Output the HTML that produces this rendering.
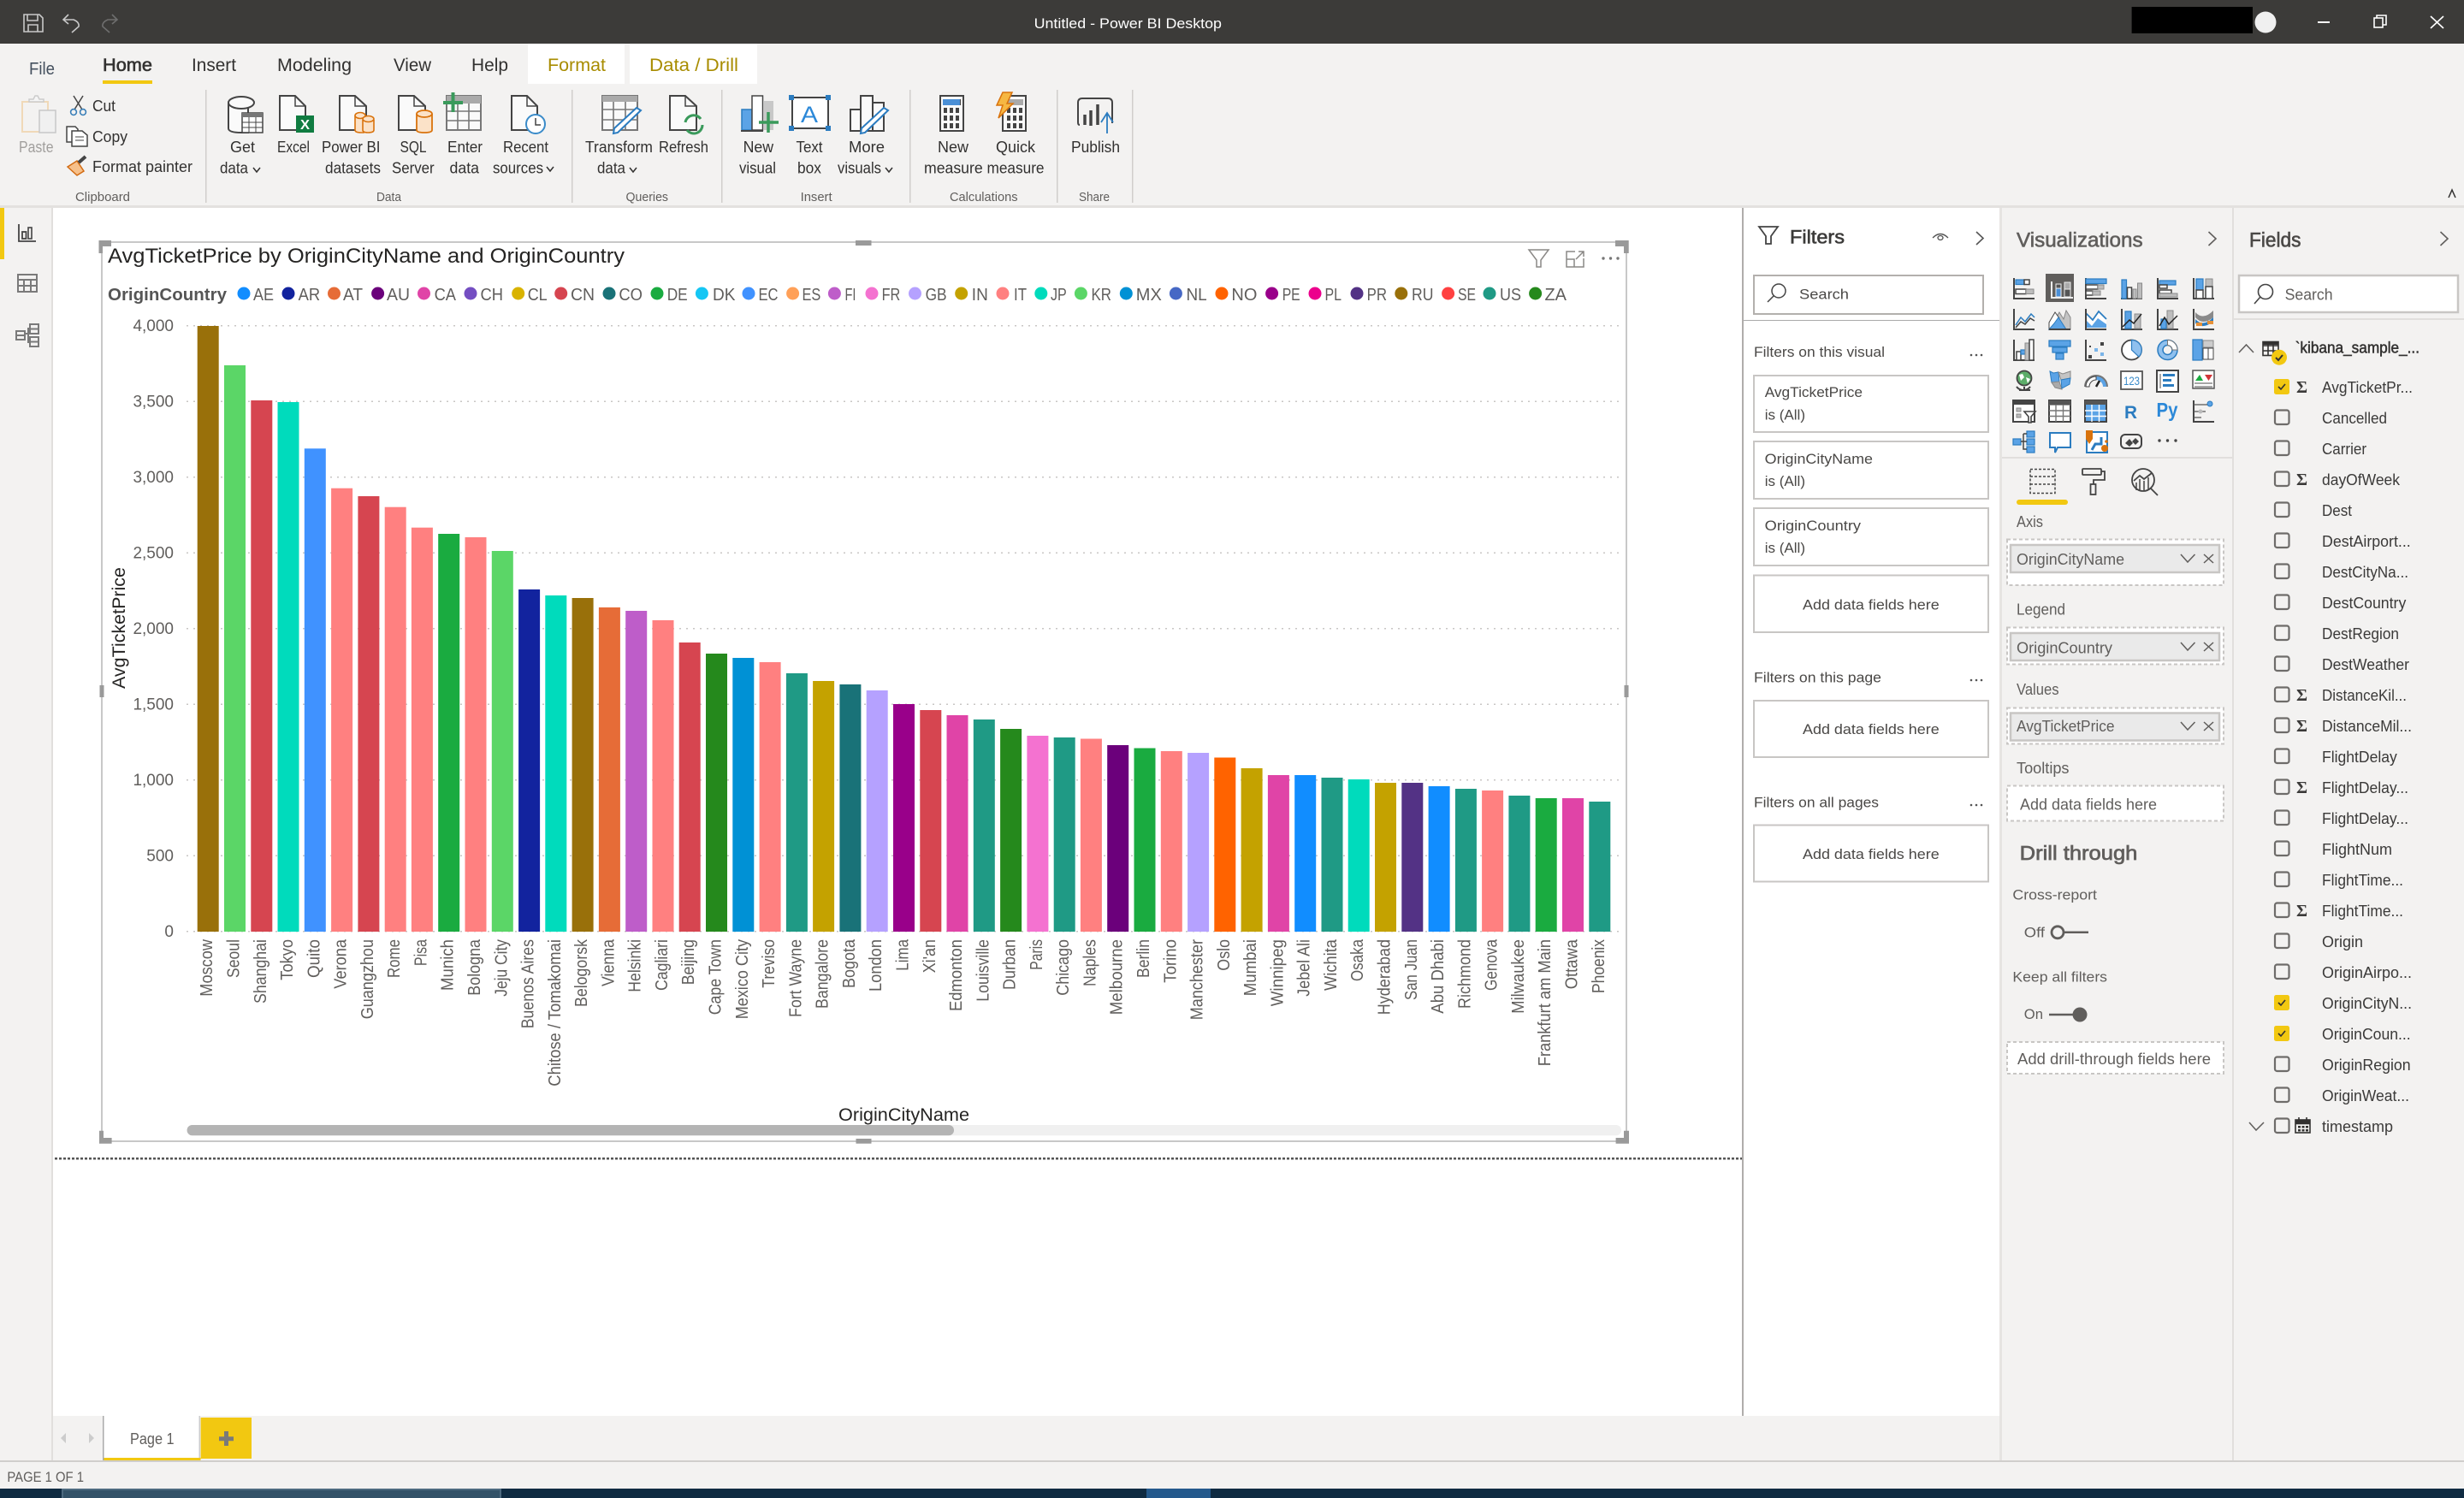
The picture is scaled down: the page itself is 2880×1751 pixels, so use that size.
<!DOCTYPE html>
<html lang="en"><head><meta charset="utf-8"><title>Untitled - Power BI Desktop</title>
<style>
html,body{margin:0;padding:0;width:2880px;height:1751px;overflow:hidden;background:#fff}
svg{display:block;font-family:"Liberation Sans",sans-serif}
.k{fill:none;stroke:#444;stroke-width:2}
.t{fill:none;stroke:#444;stroke-width:1.5}
.b{fill:#5ba3e6;stroke:#2b7cc0;stroke-width:1.2}
.g{fill:#bdbdbd;stroke:#8a8a8a;stroke-width:1}
.w{fill:#fff;stroke:#444;stroke-width:1.5}
.rb{font-size:18px;fill:#323130}
.gl{font-size:15px;fill:#605e5c}
.tb{font-size:21px;fill:#323130}
.lg{font-size:20px;fill:#605e5c}
.ya{font-size:19px;fill:#605e5c}
.xl{font-size:20px;fill:#605e5c}
.fp{font-size:17px;fill:#4a4846}
.vp{font-size:18px;fill:#605e5c}
.fd{font-size:18.5px;fill:#3b3a39}
.cb{fill:none;stroke:#6e6c6a;stroke-width:2.2}
.ck{fill:#f2c811}
.cm{fill:none;stroke:#323130;stroke-width:1.6}
.fb{fill:#fff;stroke:#c8c6c4;stroke-width:2}
.dw{fill:#fff;stroke:#c8c6c4;stroke-width:2;stroke-dasharray:4 3}
.ch{fill:#eaeaea;stroke:#c8c6c4;stroke-width:2.5}
.hd{fill:#9a9a9a}
</style></head><body>
<svg width="2880" height="1751" viewBox="0 0 2880 1751" xmlns="http://www.w3.org/2000/svg">
<!-- backgrounds -->
<rect width="2880" height="1751" fill="#f3f2f1"/>
<rect x="62" y="243" width="1974" height="1412" fill="#fff"/>
<rect x="2038" y="243" width="299" height="1412" fill="#fff"/>
<rect x="2036" y="243" width="2" height="1412" fill="#b0adab"/>
<rect x="60" y="243" width="2" height="1464" fill="#e1dfdd"/>
<rect x="2337" y="243" width="3" height="1464" fill="#e6e4e2"/>
<rect x="2609" y="243" width="2" height="1464" fill="#e1dfdd"/>
<rect x="0" y="240" width="2880" height="3" fill="#e3e1df"/>
<!-- title bar -->
<rect width="2880" height="51" fill="#3c3b39"/>
<g fill="none" stroke="#c8c8c8" stroke-width="1.6">
<path d="M28 17H46L50 21V37H28Z"/><path d="M32 17V24H44V17M33 37V29H44V37"/>
<path d="M80 17L74 23 80 28M74 23H86Q93 26 92 31L84 38"/>
<path stroke="#6e6e6e" d="M131 17L137 23 131 28M137 23H126Q119 26 120 31L128 38"/>
</g>
<text x="1208.6" y="33" font-size="17" fill="#fff" textLength="219.4" lengthAdjust="spacingAndGlyphs">Untitled - Power BI Desktop</text>
<rect x="2491.6" y="8" width="141.4" height="31" fill="#000"/>
<circle cx="2648" cy="26" r="12.5" fill="#f0f0f0"/>
<rect x="2709" y="25" width="14" height="2" fill="#fff"/>
<g fill="none" stroke="#fff" stroke-width="1.6"><rect x="2775" y="21" width="10" height="11"/><path d="M2778 21V18H2789V29H2785"/><path d="M2841 19L2856 33M2856 19L2841 33"/></g>
<!-- tabs -->
<rect x="617" y="51" width="113" height="47" fill="#fff"/>
<rect x="736" y="51" width="149" height="47" fill="#fff"/>
<text x="34" y="87" style="fill:#44505e;font-size:20px" textLength="30" lengthAdjust="spacingAndGlyphs">File</text>
<text x="120" y="83" class="tb" stroke="#323130" stroke-width=".6" textLength="58" lengthAdjust="spacingAndGlyphs">Home</text>
<rect x="120" y="94" width="58" height="4" fill="#f2c811"/>
<text x="224" y="83" class="tb" textLength="52" lengthAdjust="spacingAndGlyphs">Insert</text>
<text x="324" y="83" class="tb" textLength="87" lengthAdjust="spacingAndGlyphs">Modeling</text>
<text x="460" y="83" class="tb" textLength="44" lengthAdjust="spacingAndGlyphs">View</text>
<text x="551" y="83" class="tb" textLength="43" lengthAdjust="spacingAndGlyphs">Help</text>
<text x="640" y="83" class="tb" style="fill:#a88c00" textLength="68" lengthAdjust="spacingAndGlyphs">Format</text>
<text x="759" y="83" class="tb" style="fill:#a88c00" textLength="104" lengthAdjust="spacingAndGlyphs">Data / Drill</text>
<!-- ribbon separators -->
<g fill="#d0cecc"><rect x="240" y="105" width="1.5" height="132"/><rect x="668" y="105" width="1.5" height="132"/><rect x="843" y="105" width="1.5" height="132"/><rect x="1063" y="105" width="1.5" height="132"/><rect x="1235" y="105" width="1.5" height="132"/><rect x="1323" y="105" width="1.5" height="132"/></g>
<!-- ribbon group labels -->
<text x="88" y="235" class="gl" textLength="64" lengthAdjust="spacingAndGlyphs">Clipboard</text>
<text x="440" y="235" class="gl" textLength="29" lengthAdjust="spacingAndGlyphs">Data</text>
<text x="731.5" y="235" class="gl" textLength="49.5" lengthAdjust="spacingAndGlyphs">Queries</text>
<text x="935.6" y="235" class="gl" textLength="37" lengthAdjust="spacingAndGlyphs">Insert</text>
<text x="1110" y="235" class="gl" textLength="79.5" lengthAdjust="spacingAndGlyphs">Calculations</text>
<text x="1261" y="235" class="gl" textLength="36" lengthAdjust="spacingAndGlyphs">Share</text>
<!-- ribbon labels -->
<text x="22" y="178" class="rb" style="fill:#a19f9d" textLength="40.5" lengthAdjust="spacingAndGlyphs">Paste</text>
<text x="108" y="130" class="rb" textLength="27" lengthAdjust="spacingAndGlyphs">Cut</text>
<text x="108" y="166" class="rb" textLength="41" lengthAdjust="spacingAndGlyphs">Copy</text>
<text x="108" y="201" class="rb" textLength="117" lengthAdjust="spacingAndGlyphs">Format painter</text>
<text x="269" y="178" class="rb" textLength="29" lengthAdjust="spacingAndGlyphs">Get</text>
<text x="257" y="202.5" class="rb" textLength="33" lengthAdjust="spacingAndGlyphs">data</text>
<text x="324" y="178" class="rb" textLength="38" lengthAdjust="spacingAndGlyphs">Excel</text>
<text x="376" y="178" class="rb" textLength="68.5" lengthAdjust="spacingAndGlyphs">Power BI</text>
<text x="380" y="202.5" class="rb" textLength="65" lengthAdjust="spacingAndGlyphs">datasets</text>
<text x="467.5" y="178" class="rb" textLength="31" lengthAdjust="spacingAndGlyphs">SQL</text>
<text x="458" y="202.5" class="rb" textLength="49.6" lengthAdjust="spacingAndGlyphs">Server</text>
<text x="523" y="178" class="rb" textLength="41" lengthAdjust="spacingAndGlyphs">Enter</text>
<text x="525.5" y="202.5" class="rb" textLength="34.5" lengthAdjust="spacingAndGlyphs">data</text>
<text x="588" y="178" class="rb" textLength="53" lengthAdjust="spacingAndGlyphs">Recent</text>
<text x="576" y="202.5" class="rb" textLength="59" lengthAdjust="spacingAndGlyphs">sources</text>
<text x="684" y="178" class="rb" textLength="79" lengthAdjust="spacingAndGlyphs">Transform</text>
<text x="698" y="202.5" class="rb" textLength="33" lengthAdjust="spacingAndGlyphs">data</text>
<text x="770" y="178" class="rb" textLength="58" lengthAdjust="spacingAndGlyphs">Refresh</text>
<text x="868.6" y="178" class="rb" textLength="35.5" lengthAdjust="spacingAndGlyphs">New</text>
<text x="864" y="202.5" class="rb" textLength="43" lengthAdjust="spacingAndGlyphs">visual</text>
<text x="930.5" y="178" class="rb" textLength="31" lengthAdjust="spacingAndGlyphs">Text</text>
<text x="932" y="202.5" class="rb" textLength="28" lengthAdjust="spacingAndGlyphs">box</text>
<text x="992" y="178" class="rb" textLength="42" lengthAdjust="spacingAndGlyphs">More</text>
<text x="979" y="202.5" class="rb" textLength="51" lengthAdjust="spacingAndGlyphs">visuals</text>
<text x="1096" y="178" class="rb" textLength="36" lengthAdjust="spacingAndGlyphs">New</text>
<text x="1080" y="202.5" class="rb" textLength="68.7" lengthAdjust="spacingAndGlyphs">measure</text>
<text x="1164" y="178" class="rb" textLength="46" lengthAdjust="spacingAndGlyphs">Quick</text>
<text x="1153.5" y="202.5" class="rb" textLength="67" lengthAdjust="spacingAndGlyphs">measure</text>
<text x="1252" y="178" class="rb" textLength="57" lengthAdjust="spacingAndGlyphs">Publish</text>
<g fill="none" stroke="#323130" stroke-width="1.5"><path d="M296 196L300 201 304 196"/><path d="M639 195L643 200 647 195"/><path d="M736 196L740 201 744 196"/><path d="M1035 196L1039 201 1043 196"/><path d="M2862 231L2866 222 2870 231"/></g>
<!-- ribbon icons -->
<g>
<rect x="26" y="119" width="30" height="35" fill="none" stroke="#f0d9b8" stroke-width="2"/>
<path d="M34 119v-3h5l2-4h3l2 4h5v3z" fill="#f5f5f5" stroke="#ccc" stroke-width="1.5"/>
<rect x="46" y="129" width="19" height="26" fill="#f0f0f0" stroke="#c8c8c8" stroke-width="1.5"/>
<path d="M86 112L96 128M97 112L87 128" class="t"/>
<circle cx="86" cy="131" r="3.4" fill="none" stroke="#3a7fb8" stroke-width="1.6"/><circle cx="97" cy="131" r="3.4" fill="none" stroke="#3a7fb8" stroke-width="1.6"/>
<path d="M78 148H88L91 151V166H78Z" class="w"/><path d="M84 153H96L102 158V171H84Z" class="w"/><path d="M88 160H98M88 164H98" class="t" style="stroke-width:1"/>
<path d="M79 195L90 188 98 200 90 205Z" fill="#f7c08a" stroke="#d26b12" stroke-width="1.5"/><path d="M92 190L100 183" stroke="#444" stroke-width="4" fill="none"/>
<!-- get data -->
<path d="M267 120V150Q267 155 282 155H290V120" fill="#fafafa" stroke="#444" stroke-width="2"/><ellipse cx="282" cy="120" rx="15" ry="7" fill="#fafafa" stroke="#444" stroke-width="2"/>
<rect x="283" y="132" width="24" height="23" fill="#fff" stroke="#444" stroke-width="1.5"/><rect x="283" y="132" width="24" height="5" fill="#777"/><path d="M283 143H307M283 149H307M291 137V155M299 137V155" class="t" style="stroke-width:1"/>
<!-- excel -->
<path d="M327 112H345L357 124V152H327Z" fill="#fafafa" stroke="#444" stroke-width="2"/><path d="M345 112V124H357" class="t"/>
<rect x="346" y="135" width="21" height="20" fill="#107c41"/><text x="351" y="151" font-size="16" font-weight="700" fill="#fff" textLength="11" lengthAdjust="spacingAndGlyphs">X</text>
<!-- powerbi -->
<path d="M397 112H415L428 124V152H397Z" fill="#fafafa" stroke="#444" stroke-width="2"/><path d="M415 112V124H428" class="t"/>
<g fill="#fbe2c8" stroke="#d9730d" stroke-width="1.6"><path d="M415 135V152Q415 155 422 155H425V135"/><ellipse cx="421" cy="135" rx="6" ry="3.5"/><path d="M424 140V152Q424 155 430 155Q437 155 437 152V140"/><ellipse cx="430.5" cy="139" rx="6.5" ry="3.5"/></g>
<!-- sql -->
<path d="M466 112H484L497 124V152H466Z" fill="#fafafa" stroke="#444" stroke-width="2"/><path d="M484 112V124H497" class="t"/>
<g fill="#fbe2c8" stroke="#d9730d" stroke-width="1.8"><path d="M487 133V152Q487 155 496 155Q505 155 505 152V133"/><ellipse cx="496" cy="133" rx="9" ry="4"/></g>
<!-- enter -->
<rect x="522" y="112" width="40" height="40" fill="#fafafa" stroke="#777" stroke-width="2"/><rect x="522" y="112" width="40" height="9" fill="#aaa"/><path d="M522 130H562M522 141H562M535 121V152M548 121V152" fill="none" stroke="#777" stroke-width="1.6"/>
<path d="M518 120H541M529.5 108V131" stroke="#3a9a5b" stroke-width="4" fill="none"/>
<!-- recent -->
<path d="M598 112H616L628 124V152H598Z" fill="#fafafa" stroke="#444" stroke-width="2"/><path d="M616 112V124H628" class="t"/>
<circle cx="626" cy="145" r="11" fill="#fff" stroke="#3a8bc9" stroke-width="2"/><path d="M626 138V146H632" class="t"/>
<!-- transform -->
<rect x="704" y="112" width="41" height="40" fill="#fafafa" stroke="#777" stroke-width="2"/><rect x="704" y="112" width="41" height="7" fill="#aaa"/><path d="M704 128H745M704 140H745M717 119V152M731 119V152" fill="none" stroke="#777" stroke-width="1.6"/>
<path d="M744 126L749 129 722 155 717 156 718 150Z" fill="#fff" stroke="#2b7cc0" stroke-width="2"/>
<!-- refresh -->
<path d="M783 112H801L814 124V152H783Z" fill="#fafafa" stroke="#444" stroke-width="2"/><path d="M801 112V124H814" class="t"/>
<path d="M801 143A10 10 0 0 1 819 139M821 146A10 10 0 0 1 803 152" fill="none" stroke="#3a9a5b" stroke-width="3"/>
<!-- new visual -->
<rect x="867" y="128" width="12" height="24" fill="#5ba3e6" stroke="#2b7cc0" stroke-width="1.5"/><rect x="879" y="112" width="12.5" height="40" fill="#fff" stroke="#444" stroke-width="1.5"/><rect x="892" y="118" width="12" height="34" fill="#c8c8c8"/><path d="M866 153H892" class="k"/>
<path d="M887 143H910M898 131V155" stroke="#3a9a5b" stroke-width="3.5" fill="none"/>
<!-- text box -->
<rect x="926" y="114" width="42" height="36" fill="#fff" stroke="#444" stroke-width="2"/>
<g fill="#2b7cc0"><rect x="922" y="111" width="6" height="6"/><rect x="965" y="111" width="6" height="6"/><rect x="922" y="147" width="6" height="6"/><rect x="965" y="147" width="6" height="6"/></g>
<text x="936" y="143" font-size="27" fill="#2b88d8" textLength="20" lengthAdjust="spacingAndGlyphs">A</text>
<!-- more visuals -->
<rect x="994" y="128" width="12" height="25" fill="#fafafa" stroke="#444" stroke-width="2"/><rect x="1006" y="112" width="14" height="41" fill="#fafafa" stroke="#444" stroke-width="2"/><rect x="1020" y="120" width="13" height="33" fill="#fafafa" stroke="#444" stroke-width="2"/>
<path d="M1033 126L1038 129 1011 155 1006 156 1007 150Z" fill="#fff" stroke="#2b7cc0" stroke-width="2"/>
<!-- new measure -->
<rect x="1099" y="112" width="27" height="41" fill="#fafafa" stroke="#444" stroke-width="2"/><rect x="1102" y="116" width="21" height="7" fill="#444"/><rect x="1102" y="116" width="20" height="7" fill="#4a8fd6"/>
<g fill="#444"><rect x="1103" y="126" width="4" height="6"/><rect x="1110" y="126" width="4" height="6"/><rect x="1117" y="126" width="4" height="6"/><rect x="1103" y="135" width="4" height="6"/><rect x="1110" y="135" width="4" height="6"/><rect x="1117" y="135" width="4" height="6"/><rect x="1103" y="144" width="4" height="6"/><rect x="1110" y="144" width="4" height="6"/><rect x="1117" y="144" width="4" height="6"/></g>
<!-- quick measure -->
<rect x="1172" y="112" width="27" height="41" fill="#fafafa" stroke="#444" stroke-width="2"/><rect x="1176" y="116" width="20" height="7" fill="#aaa"/>
<g fill="#444"><rect x="1177" y="126" width="4" height="6"/><rect x="1184" y="126" width="4" height="6"/><rect x="1191" y="126" width="4" height="6"/><rect x="1177" y="135" width="4" height="6"/><rect x="1184" y="135" width="4" height="6"/><rect x="1191" y="135" width="4" height="6"/><rect x="1177" y="144" width="4" height="6"/><rect x="1184" y="144" width="4" height="6"/><rect x="1191" y="144" width="4" height="6"/></g>
<path d="M1172 108H1183L1177 121H1184L1167 138 1172 123H1165Z" fill="#f6b742" stroke="#d9730d" stroke-width="1.5"/>
<!-- publish -->
<path d="M1262 146Q1260 146 1260 143V120Q1260 115 1265 115H1295Q1300 115 1300 120V144" fill="none" stroke="#444" stroke-width="2"/>
<path d="M1268 146V134M1275 147V129M1283 146V122" stroke="#444" stroke-width="3.5" fill="none"/>
<path d="M1294 156V133M1287 143L1294 132 1301 143" fill="none" stroke="#2b7cc0" stroke-width="1.8"/>
</g>
<!-- side bar -->
<rect x="0" y="243" width="5" height="60" fill="#f2c811"/>
<g fill="none" stroke="#444" stroke-width="1.8"><path d="M22 262V282H42"/><rect x="26" y="271" width="4.5" height="8"/><rect x="32" y="268" width="0" height="0"/><rect x="33" y="266" width="4" height="13" style="stroke-width:1.6"/></g>
<g fill="none" stroke="#7a7a7a" stroke-width="2"><rect x="21" y="321" width="22" height="20"/><path d="M21 327H43M21 334H43M28 327V341M36 327V341"/>
<rect x="19" y="387" width="10" height="10"/><rect x="35" y="379" width="10" height="11"/><rect x="35" y="394" width="10" height="11"/><path d="M29 390H33V384H35M33 390V400H35M19 392H29M35 384.500H45M35 399.500H45"/></g>
<!-- visual frame -->
<g fill="none" stroke="#c8c8c8" stroke-width="2"><path d="M119 290V1334H1901V290M125 283H1897"/></g>
<!-- title -->
<text x="126" y="307" font-size="24" fill="#252423" textLength="604" lengthAdjust="spacingAndGlyphs">AvgTicketPrice by OriginCityName and OriginCountry</text>
<!-- legend -->
<text x="126" y="351" font-size="20" font-weight="700" fill="#555" textLength="139" lengthAdjust="spacingAndGlyphs">OriginCountry</text>
<g>
<circle cx="285" cy="343" r="7.5" fill="#118dff"/><text x="296" y="351" class="lg" textLength="24" lengthAdjust="spacingAndGlyphs">AE</text>
<circle cx="337" cy="343" r="7.5" fill="#12239e"/><text x="348.6" y="351" class="lg" textLength="25.5" lengthAdjust="spacingAndGlyphs">AR</text>
<circle cx="390.500" cy="343" r="7.5" fill="#e66c37"/><text x="401" y="351" class="lg" textLength="23" lengthAdjust="spacingAndGlyphs">AT</text>
<circle cx="441.600" cy="343" r="7.5" fill="#6b007b"/><text x="452" y="351" class="lg" textLength="27" lengthAdjust="spacingAndGlyphs">AU</text>
<circle cx="495.500" cy="343" r="7.5" fill="#e044a7"/><text x="507.6" y="351" class="lg" textLength="25.4" lengthAdjust="spacingAndGlyphs">CA</text>
<circle cx="550" cy="343" r="7.5" fill="#744ec2"/><text x="561.5" y="351" class="lg" textLength="26.5" lengthAdjust="spacingAndGlyphs">CH</text>
<circle cx="605.700" cy="343" r="7.5" fill="#d9b300"/><text x="616.7" y="351" class="lg" textLength="23" lengthAdjust="spacingAndGlyphs">CL</text>
<circle cx="655.700" cy="343" r="7.5" fill="#d64550"/><text x="667" y="351" class="lg" textLength="28" lengthAdjust="spacingAndGlyphs">CN</text>
<circle cx="712" cy="343" r="7.5" fill="#197278"/><text x="723.4" y="351" class="lg" textLength="27.6" lengthAdjust="spacingAndGlyphs">CO</text>
<circle cx="768" cy="343" r="7.5" fill="#1aab40"/><text x="779.7" y="351" class="lg" textLength="24" lengthAdjust="spacingAndGlyphs">DE</text>
<circle cx="820.400" cy="343" r="7.5" fill="#15c6f4"/><text x="833" y="351" class="lg" textLength="26.5" lengthAdjust="spacingAndGlyphs">DK</text>
<circle cx="875" cy="343" r="7.5" fill="#4092ff"/><text x="886.5" y="351" class="lg" textLength="23" lengthAdjust="spacingAndGlyphs">EC</text>
<circle cx="926.600" cy="343" r="7.5" fill="#ffa058"/><text x="937.5" y="351" class="lg" textLength="21.8" lengthAdjust="spacingAndGlyphs">ES</text>
<circle cx="975.400" cy="343" r="7.5" fill="#be5dc9"/><text x="987.5" y="351" class="lg" textLength="13" lengthAdjust="spacingAndGlyphs">FI</text>
<circle cx="1019" cy="343" r="7.5" fill="#f472d0"/><text x="1030.6" y="351" class="lg" textLength="21.7" lengthAdjust="spacingAndGlyphs">FR</text>
<circle cx="1069.500" cy="343" r="7.5" fill="#b5a1ff"/><text x="1081.6" y="351" class="lg" textLength="25" lengthAdjust="spacingAndGlyphs">GB</text>
<circle cx="1123.700" cy="343" r="7.5" fill="#c4a200"/><text x="1135.8" y="351" class="lg" textLength="19" lengthAdjust="spacingAndGlyphs">IN</text>
<circle cx="1172" cy="343" r="7.5" fill="#ff8080"/><text x="1185" y="351" class="lg" textLength="15" lengthAdjust="spacingAndGlyphs">IT</text>
<circle cx="1216.800" cy="343" r="7.5" fill="#00dbbc"/><text x="1228" y="351" class="lg" textLength="18.8" lengthAdjust="spacingAndGlyphs">JP</text>
<circle cx="1263.400" cy="343" r="7.5" fill="#5bd667"/><text x="1275.5" y="351" class="lg" textLength="23.5" lengthAdjust="spacingAndGlyphs">KR</text>
<circle cx="1316.300" cy="343" r="7.5" fill="#0091d5"/><text x="1327.8" y="351" class="lg" textLength="30" lengthAdjust="spacingAndGlyphs">MX</text>
<circle cx="1374.400" cy="343" r="7.5" fill="#4668c5"/><text x="1386.5" y="351" class="lg" textLength="24.2" lengthAdjust="spacingAndGlyphs">NL</text>
<circle cx="1428" cy="343" r="7.5" fill="#ff6300"/><text x="1439.4" y="351" class="lg" textLength="30" lengthAdjust="spacingAndGlyphs">NO</text>
<circle cx="1486.600" cy="343" r="7.5" fill="#99008a"/><text x="1498.7" y="351" class="lg" textLength="21" lengthAdjust="spacingAndGlyphs">PE</text>
<circle cx="1537" cy="343" r="7.5" fill="#ec008c"/><text x="1548.5" y="351" class="lg" textLength="19.5" lengthAdjust="spacingAndGlyphs">PL</text>
<circle cx="1586" cy="343" r="7.5" fill="#533285"/><text x="1597.6" y="351" class="lg" textLength="23.4" lengthAdjust="spacingAndGlyphs">PR</text>
<circle cx="1637.800" cy="343" r="7.5" fill="#99700a"/><text x="1650" y="351" class="lg" textLength="25.4" lengthAdjust="spacingAndGlyphs">RU</text>
<circle cx="1692.600" cy="343" r="7.5" fill="#ff4141"/><text x="1704" y="351" class="lg" textLength="21" lengthAdjust="spacingAndGlyphs">SE</text>
<circle cx="1741" cy="343" r="7.5" fill="#1f9a85"/><text x="1753" y="351" class="lg" textLength="25" lengthAdjust="spacingAndGlyphs">US</text>
<circle cx="1794.600" cy="343" r="7.5" fill="#25891c"/><text x="1805.5" y="351" class="lg" textLength="25.5" lengthAdjust="spacingAndGlyphs">ZA</text>
</g>
<!-- visual header icons -->
<g fill="none" stroke="#8a8886" stroke-width="1.5"><path d="M1787 292H1810L1801 304V312H1796V304Z"/><path d="M1841 294H1831V312H1851V302M1831 303H1840V312M1842 303L1851 294M1845 294H1851V300"/></g>
<g fill="#777"><circle cx="1874" cy="302" r="1.7"/><circle cx="1882.500" cy="302" r="1.7"/><circle cx="1891" cy="302" r="1.7"/></g>
<!-- gridlines -->
<g stroke="#c8c6c4" stroke-width="1.5" stroke-dasharray="2 6" fill="none">
<path d="M218 380.7H1896M218 469.2H1896M218 557.7H1896M218 646.2H1896M218 734.7H1896M218 823.2H1896M218 911.7H1896M218 1000.2H1896M218 1088.7H1896"/></g>
<!-- y labels -->
<g text-anchor="end">
<text x="203" y="387" class="ya">4,000</text><text x="203" y="475.5" class="ya">3,500</text><text x="203" y="564" class="ya">3,000</text><text x="203" y="652.5" class="ya">2,500</text><text x="203" y="741" class="ya">2,000</text><text x="203" y="829.5" class="ya">1,500</text><text x="203" y="918" class="ya">1,000</text><text x="203" y="1006.5" class="ya">500</text><text x="203" y="1095" class="ya">0</text>
</g>
<text transform="translate(146,805) rotate(-90)" font-size="21" fill="#252423" textLength="142" lengthAdjust="spacingAndGlyphs">AvgTicketPrice</text>
<text x="980" y="1310" font-size="21" fill="#252423" textLength="153" lengthAdjust="spacingAndGlyphs">OriginCityName</text>
<!-- bars -->
<g>
<rect x="230.7" y="381" width="25" height="708" fill="#99700a"/>
<rect x="262.0" y="427" width="25" height="662" fill="#5bd667"/>
<rect x="293.3" y="468" width="25" height="621" fill="#d64550"/>
<rect x="324.5" y="470" width="25" height="619" fill="#00dbbc"/>
<rect x="355.8" y="524.3" width="25" height="564.7" fill="#4092ff"/>
<rect x="387.1" y="570.7" width="25" height="518.3" fill="#ff8080"/>
<rect x="418.4" y="580" width="25" height="509" fill="#d64550"/>
<rect x="449.7" y="592.7" width="25" height="496.3" fill="#ff8080"/>
<rect x="480.9" y="616.7" width="25" height="472.3" fill="#ff8080"/>
<rect x="512.2" y="624" width="25" height="465" fill="#1aab40"/>
<rect x="543.5" y="628" width="25" height="461" fill="#ff8080"/>
<rect x="574.8" y="644" width="25" height="445" fill="#5bd667"/>
<rect x="606.1" y="689" width="25" height="400" fill="#12239e"/>
<rect x="637.3" y="696" width="25" height="393" fill="#00dbbc"/>
<rect x="668.6" y="699" width="25" height="390" fill="#99700a"/>
<rect x="699.9" y="710" width="25" height="379" fill="#e66c37"/>
<rect x="731.2" y="714" width="25" height="375" fill="#be5dc9"/>
<rect x="762.5" y="725" width="25" height="364" fill="#ff8080"/>
<rect x="793.7" y="751" width="25" height="338" fill="#d64550"/>
<rect x="825.0" y="764" width="25" height="325" fill="#25891c"/>
<rect x="856.3" y="769" width="25" height="320" fill="#0091d5"/>
<rect x="887.6" y="774" width="25" height="315" fill="#ff8080"/>
<rect x="918.9" y="787" width="25" height="302" fill="#1f9a85"/>
<rect x="950.1" y="796" width="25" height="293" fill="#c4a200"/>
<rect x="981.4" y="800" width="25" height="289" fill="#197278"/>
<rect x="1012.7" y="807" width="25" height="282" fill="#b5a1ff"/>
<rect x="1044.0" y="823" width="25" height="266" fill="#99008a"/>
<rect x="1075.3" y="830" width="25" height="259" fill="#d64550"/>
<rect x="1106.5" y="836" width="25" height="253" fill="#e044a7"/>
<rect x="1137.8" y="841" width="25" height="248" fill="#1f9a85"/>
<rect x="1169.1" y="852" width="25" height="237" fill="#25891c"/>
<rect x="1200.4" y="860" width="25" height="229" fill="#f472d0"/>
<rect x="1231.7" y="862" width="25" height="227" fill="#1f9a85"/>
<rect x="1262.9" y="863.5" width="25" height="225.5" fill="#ff8080"/>
<rect x="1294.2" y="871" width="25" height="218" fill="#6b007b"/>
<rect x="1325.5" y="874.5" width="25" height="214.5" fill="#1aab40"/>
<rect x="1356.8" y="878" width="25" height="211" fill="#ff8080"/>
<rect x="1388.1" y="880" width="25" height="209" fill="#b5a1ff"/>
<rect x="1419.3" y="885.5" width="25" height="203.5" fill="#ff6300"/>
<rect x="1450.6" y="898" width="25" height="191" fill="#c4a200"/>
<rect x="1481.9" y="906" width="25" height="183" fill="#e044a7"/>
<rect x="1513.2" y="906" width="25" height="183" fill="#118dff"/>
<rect x="1544.5" y="909" width="25" height="180" fill="#1f9a85"/>
<rect x="1575.7" y="911" width="25" height="178" fill="#00dbbc"/>
<rect x="1607.0" y="915" width="25" height="174" fill="#c4a200"/>
<rect x="1638.3" y="915" width="25" height="174" fill="#533285"/>
<rect x="1669.6" y="919" width="25" height="170" fill="#118dff"/>
<rect x="1700.9" y="922" width="25" height="167" fill="#1f9a85"/>
<rect x="1732.1" y="924" width="25" height="165" fill="#ff8080"/>
<rect x="1763.4" y="930" width="25" height="159" fill="#1f9a85"/>
<rect x="1794.7" y="933" width="25" height="156" fill="#1aab40"/>
<rect x="1826.0" y="933" width="25" height="156" fill="#e044a7"/>
<rect x="1857.3" y="937" width="25" height="152" fill="#1f9a85"/>
</g>
<!-- x labels -->
<g text-anchor="end">
<text class="xl" transform="translate(248.2,1098) rotate(-90)" textLength="66.7" lengthAdjust="spacingAndGlyphs">Moscow</text>
<text class="xl" transform="translate(279.5,1098) rotate(-90)" textLength="45" lengthAdjust="spacingAndGlyphs">Seoul</text>
<text class="xl" transform="translate(310.8,1098) rotate(-90)" textLength="75" lengthAdjust="spacingAndGlyphs">Shanghai</text>
<text class="xl" transform="translate(342,1098) rotate(-90)" textLength="47.7" lengthAdjust="spacingAndGlyphs">Tokyo</text>
<text class="xl" transform="translate(373.3,1098) rotate(-90)" textLength="45" lengthAdjust="spacingAndGlyphs">Quito</text>
<text class="xl" transform="translate(404.6,1098) rotate(-90)" textLength="57.7" lengthAdjust="spacingAndGlyphs">Verona</text>
<text class="xl" transform="translate(435.9,1098) rotate(-90)" textLength="93.3" lengthAdjust="spacingAndGlyphs">Guangzhou</text>
<text class="xl" transform="translate(467.2,1098) rotate(-90)" textLength="45" lengthAdjust="spacingAndGlyphs">Rome</text>
<text class="xl" transform="translate(498.4,1098) rotate(-90)" textLength="31" lengthAdjust="spacingAndGlyphs">Pisa</text>
<text class="xl" transform="translate(529.7,1098) rotate(-90)" textLength="60" lengthAdjust="spacingAndGlyphs">Munich</text>
<text class="xl" transform="translate(561,1098) rotate(-90)" textLength="65.7" lengthAdjust="spacingAndGlyphs">Bologna</text>
<text class="xl" transform="translate(592.3,1098) rotate(-90)" textLength="66.7" lengthAdjust="spacingAndGlyphs">Jeju City</text>
<text class="xl" transform="translate(623.6,1098) rotate(-90)" textLength="104.3" lengthAdjust="spacingAndGlyphs">Buenos Aires</text>
<text class="xl" transform="translate(654.8,1098) rotate(-90)" textLength="171.7" lengthAdjust="spacingAndGlyphs">Chitose / Tomakomai</text>
<text class="xl" transform="translate(686.1,1098) rotate(-90)" textLength="79" lengthAdjust="spacingAndGlyphs">Belogorsk</text>
<text class="xl" transform="translate(717.4,1098) rotate(-90)" textLength="55" lengthAdjust="spacingAndGlyphs">Vienna</text>
<text class="xl" transform="translate(748.7,1098) rotate(-90)" textLength="61.7" lengthAdjust="spacingAndGlyphs">Helsinki</text>
<text class="xl" transform="translate(780,1098) rotate(-90)" textLength="60" lengthAdjust="spacingAndGlyphs">Cagliari</text>
<text class="xl" transform="translate(811.2,1098) rotate(-90)" textLength="53.3" lengthAdjust="spacingAndGlyphs">Beijing</text>
<text class="xl" transform="translate(842.5,1098) rotate(-90)" textLength="88.3" lengthAdjust="spacingAndGlyphs">Cape Town</text>
<text class="xl" transform="translate(873.8,1098) rotate(-90)" textLength="93.3" lengthAdjust="spacingAndGlyphs">Mexico City</text>
<text class="xl" transform="translate(905.1,1098) rotate(-90)" textLength="56.7" lengthAdjust="spacingAndGlyphs">Treviso</text>
<text class="xl" transform="translate(936.4,1098) rotate(-90)" textLength="91" lengthAdjust="spacingAndGlyphs">Fort Wayne</text>
<text class="xl" transform="translate(967.6,1098) rotate(-90)" textLength="81" lengthAdjust="spacingAndGlyphs">Bangalore</text>
<text class="xl" transform="translate(998.9,1098) rotate(-90)" textLength="57" lengthAdjust="spacingAndGlyphs">Bogota</text>
<text class="xl" transform="translate(1030.2,1098) rotate(-90)" textLength="61" lengthAdjust="spacingAndGlyphs">London</text>
<text class="xl" transform="translate(1061.5,1098) rotate(-90)" textLength="36.7" lengthAdjust="spacingAndGlyphs">Lima</text>
<text class="xl" transform="translate(1092.8,1098) rotate(-90)" textLength="39.3" lengthAdjust="spacingAndGlyphs">Xi'an</text>
<text class="xl" transform="translate(1124,1098) rotate(-90)" textLength="84" lengthAdjust="spacingAndGlyphs">Edmonton</text>
<text class="xl" transform="translate(1155.3,1098) rotate(-90)" textLength="72.7" lengthAdjust="spacingAndGlyphs">Louisville</text>
<text class="xl" transform="translate(1186.6,1098) rotate(-90)" textLength="59" lengthAdjust="spacingAndGlyphs">Durban</text>
<text class="xl" transform="translate(1217.9,1098) rotate(-90)" textLength="35.7" lengthAdjust="spacingAndGlyphs">Paris</text>
<text class="xl" transform="translate(1249.2,1098) rotate(-90)" textLength="65.7" lengthAdjust="spacingAndGlyphs">Chicago</text>
<text class="xl" transform="translate(1280.4,1098) rotate(-90)" textLength="55" lengthAdjust="spacingAndGlyphs">Naples</text>
<text class="xl" transform="translate(1311.7,1098) rotate(-90)" textLength="88.3" lengthAdjust="spacingAndGlyphs">Melbourne</text>
<text class="xl" transform="translate(1343,1098) rotate(-90)" textLength="45" lengthAdjust="spacingAndGlyphs">Berlin</text>
<text class="xl" transform="translate(1374.3,1098) rotate(-90)" textLength="50.7" lengthAdjust="spacingAndGlyphs">Torino</text>
<text class="xl" transform="translate(1405.6,1098) rotate(-90)" textLength="94.3" lengthAdjust="spacingAndGlyphs">Manchester</text>
<text class="xl" transform="translate(1436.8,1098) rotate(-90)" textLength="36.7" lengthAdjust="spacingAndGlyphs">Oslo</text>
<text class="xl" transform="translate(1468.1,1098) rotate(-90)" textLength="66.3" lengthAdjust="spacingAndGlyphs">Mumbai</text>
<text class="xl" transform="translate(1499.4,1098) rotate(-90)" textLength="78.3" lengthAdjust="spacingAndGlyphs">Winnipeg</text>
<text class="xl" transform="translate(1530.7,1098) rotate(-90)" textLength="66.7" lengthAdjust="spacingAndGlyphs">Jebel Ali</text>
<text class="xl" transform="translate(1562,1098) rotate(-90)" textLength="60" lengthAdjust="spacingAndGlyphs">Wichita</text>
<text class="xl" transform="translate(1593.2,1098) rotate(-90)" textLength="49" lengthAdjust="spacingAndGlyphs">Osaka</text>
<text class="xl" transform="translate(1624.5,1098) rotate(-90)" textLength="88.3" lengthAdjust="spacingAndGlyphs">Hyderabad</text>
<text class="xl" transform="translate(1655.8,1098) rotate(-90)" textLength="71" lengthAdjust="spacingAndGlyphs">San Juan</text>
<text class="xl" transform="translate(1687.1,1098) rotate(-90)" textLength="86.7" lengthAdjust="spacingAndGlyphs">Abu Dhabi</text>
<text class="xl" transform="translate(1718.4,1098) rotate(-90)" textLength="81" lengthAdjust="spacingAndGlyphs">Richmond</text>
<text class="xl" transform="translate(1749.6,1098) rotate(-90)" textLength="60" lengthAdjust="spacingAndGlyphs">Genova</text>
<text class="xl" transform="translate(1780.9,1098) rotate(-90)" textLength="86.7" lengthAdjust="spacingAndGlyphs">Milwaukee</text>
<text class="xl" transform="translate(1812.2,1098) rotate(-90)" textLength="148.3" lengthAdjust="spacingAndGlyphs">Frankfurt am Main</text>
<text class="xl" transform="translate(1843.5,1098) rotate(-90)" textLength="58.3" lengthAdjust="spacingAndGlyphs">Ottawa</text>
<text class="xl" transform="translate(1874.8,1098) rotate(-90)" textLength="63" lengthAdjust="spacingAndGlyphs">Phoenix</text>
</g>
<!-- scrollbar -->
<rect x="218.600" y="1315" width="1676.400" height="12.300" rx="6" fill="#f0f0f0"/>
<rect x="218.600" y="1315" width="896.400" height="12.300" rx="6" fill="#b4b4b4"/>
<!-- handles -->
<path class="hd" d="M115.500 281H130V288H120V296H115.500Z"/>
<rect class="hd" x="1000" y="281" width="18.500" height="6"/>
<path class="hd" d="M1888 281H1903.700V296H1898V288H1888Z"/>
<rect class="hd" x="116.500" y="801" width="5" height="14"/>
<rect class="hd" x="1898.500" y="801" width="5" height="14"/>
<path class="hd" d="M116 1321.700H121V1330H130.600V1336.700H116Z"/>
<rect class="hd" x="1000.500" y="1331" width="18" height="5.700"/>
<path class="hd" d="M1898 1321.700H1904V1336.700H1888.600V1330H1898Z"/>
<!-- page edge dotted -->
<path d="M64 1354.300H2036" stroke="#555" stroke-width="2.500" stroke-dasharray="3 2" fill="none"/>
<!-- page tabs -->
<rect x="120.500" y="1655" width="113" height="52" fill="#fff"/>
<rect x="120" y="1655" width="1.500" height="52" fill="#aaa"/>
<rect x="232.500" y="1655" width="1.500" height="52" fill="#ccc"/>
<rect x="121.500" y="1704" width="113" height="3" fill="#f2c811"/>
<rect x="234.600" y="1657" width="59.400" height="48" fill="#f2c811"/>
<path d="M256 1681.700H273M264.500 1673V1690" stroke="#7a7a7a" stroke-width="5" fill="none"/>
<path d="M77 1675V1687L71 1681Z" fill="#ccc"/><path d="M104 1675V1687L110 1681Z" fill="#ccc"/>
<text x="152" y="1688" font-size="18" fill="#605e5c" textLength="51.600" lengthAdjust="spacingAndGlyphs">Page 1</text>
<!-- status -->
<rect x="0" y="1707" width="2880" height="2" fill="#d0cecc"/>
<text x="8.400" y="1732" font-size="16.500" fill="#605e5c" textLength="89.600" lengthAdjust="spacingAndGlyphs">PAGE 1 OF 1</text>
<rect x="0" y="1740" width="2880" height="11" fill="#0f2b42"/>
<rect x="72" y="1740" width="514" height="11" fill="#4d6a80"/><rect x="74" y="1742" width="510" height="9" fill="#335268"/>
<rect x="1340" y="1740" width="75" height="11" fill="#24598c"/>
<!-- FILTERS -->
<g fill="none" stroke="#444" stroke-width="1.800"><path d="M2056 265H2078L2070 276V285H2064V276Z"/></g>
<text x="2092" y="284.500" font-size="22" fill="#3b3a39" stroke="#3b3a39" stroke-width=".6" textLength="64" lengthAdjust="spacingAndGlyphs">Filters</text>
<g fill="none" stroke="#555" stroke-width="1.300"><path d="M2259 278Q2268 269 2277 278"/><ellipse cx="2268" cy="278" rx="3" ry="2.500"/></g>
<path d="M2310 271L2318 278.500 2310 286" fill="none" stroke="#555" stroke-width="1.600"/>
<rect x="2050" y="322" width="268" height="45" fill="#fff" stroke="#b3b0ad" stroke-width="2"/>
<g fill="none" stroke="#444" stroke-width="1.500"><circle cx="2079" cy="340" r="8"/><path d="M2073 346L2066 353"/></g>
<text x="2103" y="349.500" class="fp" textLength="58" lengthAdjust="spacingAndGlyphs">Search</text>
<rect x="2038" y="374" width="299" height="1" fill="#aaa"/>
<text x="2050" y="417" class="fp" textLength="153" lengthAdjust="spacingAndGlyphs">Filters on this visual</text>
<g fill="#555"><circle cx="2304" cy="415" r="1.300"/><circle cx="2310" cy="415" r="1.300"/><circle cx="2316" cy="415" r="1.300"/><circle cx="2304" cy="795" r="1.300"/><circle cx="2310" cy="795" r="1.300"/><circle cx="2316" cy="795" r="1.300"/><circle cx="2304" cy="941" r="1.300"/><circle cx="2310" cy="941" r="1.300"/><circle cx="2316" cy="941" r="1.300"/></g>
<rect x="2050" y="439" width="274" height="66" class="fb"/>
<text x="2062.700" y="464" class="fp" textLength="114.300" lengthAdjust="spacingAndGlyphs">AvgTicketPrice</text>
<text x="2062.700" y="490.500" class="fp" textLength="47.300" lengthAdjust="spacingAndGlyphs">is (All)</text>
<rect x="2050" y="516" width="274" height="67" class="fb"/>
<text x="2062.700" y="542" class="fp" textLength="126.300" lengthAdjust="spacingAndGlyphs">OriginCityName</text>
<text x="2062.700" y="568" class="fp" textLength="47.300" lengthAdjust="spacingAndGlyphs">is (All)</text>
<rect x="2050" y="594" width="274" height="67" class="fb"/>
<text x="2062.700" y="620" class="fp" textLength="112.300" lengthAdjust="spacingAndGlyphs">OriginCountry</text>
<text x="2062.700" y="646" class="fp" textLength="47.300" lengthAdjust="spacingAndGlyphs">is (All)</text>
<rect x="2050" y="672.500" width="274" height="66.500" class="fb"/>
<text x="2107" y="712.500" class="fp" textLength="159.700" lengthAdjust="spacingAndGlyphs">Add data fields here</text>
<text x="2050" y="797.500" class="fp" textLength="149" lengthAdjust="spacingAndGlyphs">Filters on this page</text>
<rect x="2050" y="819" width="274" height="66" class="fb"/>
<text x="2107" y="858" class="fp" textLength="159.700" lengthAdjust="spacingAndGlyphs">Add data fields here</text>
<text x="2050" y="943.500" class="fp" textLength="146" lengthAdjust="spacingAndGlyphs">Filters on all pages</text>
<rect x="2050" y="964.500" width="274" height="66" class="fb"/>
<text x="2107" y="1004" class="fp" textLength="159.700" lengthAdjust="spacingAndGlyphs">Add data fields here</text>
<!-- VISUALIZATIONS -->
<text x="2357" y="288.300" font-size="24" fill="#605e5c" stroke="#605e5c" stroke-width=".6" textLength="147.600" lengthAdjust="spacingAndGlyphs">Visualizations</text>
<path d="M2581.500 271L2590 279 2581.500 287" fill="none" stroke="#605e5c" stroke-width="1.600"/>
<rect x="2391" y="320" width="33" height="33" fill="#605e5c"/>
<!-- vis icons row 1 -->
<g transform="translate(2353,325)"><path class="k" d="M1 0V24H25"/><rect class="b" x="3" y="2" width="10" height="5.500"/><rect class="w" x="13" y="2" width="6" height="5.500"/><rect class="w" x="3" y="13" width="12" height="5.500"/><rect class="g" x="15" y="13" width="9" height="5.500"/></g>
<g transform="translate(2395,325)"><path d="M3 4V23H28" fill="none" stroke="#eee" stroke-width="2"/><rect x="8" y="12" width="6" height="10" fill="#4a90d9" stroke="#eee"/><rect x="8" y="7" width="6" height="5" fill="#555" stroke="#eee"/><rect x="18" y="5" width="7" height="8" fill="#aaa" stroke="#eee"/><rect x="18" y="13" width="7" height="9" fill="#555" stroke="#eee"/></g>
<g transform="translate(2437,325)"><path class="k" d="M1 0V24H25"/><rect class="b" x="1" y="1" width="24" height="5.500"/><rect class="w" x="1" y="8" width="14" height="5"/><rect class="g" x="15" y="8" width="7" height="5"/><rect class="w" x="1" y="15" width="8" height="5"/><rect class="g" x="9" y="15" width="9" height="5"/></g>
<g transform="translate(2479,325)"><path class="k" d="M0 24H25"/><rect class="b" x="1" y="2" width="5.500" height="22"/><rect class="w" x="7.500" y="11" width="5" height="13"/><rect class="g" x="14" y="13" width="4" height="11"/><rect class="g" x="19.500" y="6" width="5" height="18"/></g>
<g transform="translate(2521,325)"><path class="k" d="M1 0V24H25"/><rect class="b" x="3" y="3" width="19" height="5"/><rect class="w" x="3" y="8" width="9" height="4"/><rect class="w" x="3" y="14" width="14" height="4"/><rect class="g" x="3" y="18" width="21" height="4"/></g>
<g transform="translate(2563,325)"><path class="k" d="M0 24H25"/><path class="k" d="M1 0V24"/><rect class="b" x="4" y="1" width="8" height="13"/><rect class="w" x="4" y="14" width="8" height="10"/><rect class="g" x="15" y="1" width="8" height="9"/><rect class="w" x="15" y="10" width="8" height="14"/></g>
<!-- row 2 -->
<g transform="translate(2353,361)"><path class="k" d="M1 0V24H25"/><path d="M3 19L9 10 14 15 21 6 25 10" fill="none" stroke="#2b7cc0" stroke-width="1.500"/><path d="M3 22L9 15 14 18 20 11 25 14" fill="none" stroke="#444" stroke-width="1.500"/></g>
<g transform="translate(2395,361)"><path d="M0 24L12 4 17 12 20 2 25 10V24Z" fill="#c4c4c4" stroke="#888"/><path d="M0 24V16L7 4 12 11 7 17Z" fill="#fff" stroke="#444"/><path d="M0 24L6 17 11 10 20 24Z" fill="#5ba3e6" stroke="#2b7cc0"/><path class="k" d="M0 24H25"/></g>
<g transform="translate(2437,361)"><path d="M1 22V6L9 13 16 4 25 12V22Z" fill="#fff"/><path d="M1 22V13L8 20 15 11 25 18V22Z" fill="#5ba3e6"/><path d="M1 5L9 13 16 3 25 12" fill="none" stroke="#2b7cc0" stroke-width="1.800"/><path class="k" d="M1 0V24H25"/></g>
<g transform="translate(2479,361)"><path class="k" d="M1 0V24H25"/><rect class="b" x="5" y="3" width="7" height="20"/><rect class="g" x="16" y="6" width="7" height="17"/><path d="M2 21L10 13 15 17 24 6" fill="none" stroke="#222" stroke-width="1.500"/></g>
<g transform="translate(2521,361)"><path class="k" d="M1 0V24H25"/><rect class="b" x="5" y="12" width="6" height="11"/><rect class="g" x="12" y="2" width="7" height="21"/><path d="M3 20L9 10 14 18 24 8" fill="none" stroke="#222" stroke-width="1.500"/></g>
<g transform="translate(2563,361)"><path class="k" d="M1 0V24H25"/><path d="M3 4Q12 14 24 2V10Q12 20 3 10Z" fill="#8a8a8a"/><path d="M3 12Q12 22 24 10V15Q12 24 3 17Z" fill="#2b7cc0"/><rect x="4" y="16" width="7" height="4" fill="#e69138"/><rect x="17" y="14" width="7" height="4" fill="#e69138"/></g>
<!-- row 3 -->
<g transform="translate(2353,397)"><path class="k" d="M1 0V24H25"/><rect class="w" x="4" y="14" width="5" height="10"/><rect class="b" x="9" y="12" width="5" height="5"/><rect class="g" x="14" y="4" width="5" height="20"/><rect class="w" x="19" y="0" width="5" height="24"/></g>
<g transform="translate(2395,397)"><rect class="b" x="0" y="1" width="25" height="7"/><rect class="b" x="4" y="9" width="17" height="6"/><rect class="b" x="8" y="16" width="9" height="7"/></g>
<g transform="translate(2437,397)"><path class="k" d="M1 0V24H25"/><g fill="#444"><rect x="4" y="18" width="4" height="4"/><rect x="18" y="3" width="4" height="4"/><rect x="5" y="7" width="2" height="2"/></g><g fill="#7ab4e8"><rect x="11" y="10" width="4" height="4"/><rect x="18" y="15" width="4" height="4"/></g></g>
<g transform="translate(2479,397)"><circle cx="12.500" cy="12" r="11.500" fill="#fff" stroke="#444" stroke-width="1.800"/><path d="M12.500 12V.5A11.500 11.500 0 0 1 21 20Z" fill="#8fc0ee" stroke="#2b7cc0" stroke-width="1.200"/></g>
<g transform="translate(2521,397)"><circle cx="12.500" cy="12" r="11.500" fill="#8fc0ee" stroke="#2b7cc0" stroke-width="1.500"/><circle cx="12.500" cy="12" r="5.500" fill="#f3f2f1" stroke="#2b7cc0" stroke-width="1.500"/><path d="M12.500 .5A11.500 11.500 0 0 1 24 12H18A5.500 5.500 0 0 0 12.500 6.500Z" fill="#fff" stroke="#777"/></g>
<g transform="translate(2563,397)"><rect class="b" x="0" y="0" width="11" height="24"/><rect class="g" x="12" y="1" width="12" height="8" style="fill:#ccc"/><rect x="12" y="10" width="6" height="13" fill="#fff" stroke="#444"/><rect x="18" y="10" width="6" height="13" fill="#fff" stroke="#444"/></g>
<!-- row 4 -->
<g transform="translate(2353,432)"><circle cx="13" cy="10" r="8.500" fill="#5cad69" stroke="#444" stroke-width="1.800"/><path d="M7 6L11 5 13 9 9 13ZM15 9L20 11 17 16Z" fill="#fff"/><path d="M4 20A10 10 0 0 0 20 20M13 20V24M7 24H20" fill="none" stroke="#444" stroke-width="2"/></g>
<g transform="translate(2395,432)"><path d="M1 2L5 4 11 3 12 14 7 20 3 15Z" fill="#5ba3e6" stroke="#2b7cc0"/><path d="M11 3L16 5 25 2V10L14 12Z" fill="#c4c4c4" stroke="#888"/><path d="M3 15L12 14 15 23 7 21Z" fill="#aaa" stroke="#888"/><path d="M14 12L25 10 24 17 15 22Z" fill="#5ba3e6" stroke="#2b7cc0"/></g>
<g transform="translate(2437,432)"><path d="M1 20A12 12 0 0 1 25 20" fill="none" stroke="#777" stroke-width="4"/><path d="M13 8A12 12 0 0 1 25 20H21A8 8 0 0 0 13 12Z" fill="#5ba3e6"/><path d="M1 20A12 12 0 0 1 13 8V12A8 8 0 0 0 5 20Z" fill="#fff" stroke="#444"/><path d="M13 20L17 13" stroke="#222" stroke-width="2.500"/></g>
<g transform="translate(2479,432)"><rect x="0" y="2" width="25" height="21" fill="#fff" stroke="#555" stroke-width="1.800"/><text x="3" y="18" font-size="14" fill="#3a8bc9" textLength="19" lengthAdjust="spacingAndGlyphs">123</text></g>
<g transform="translate(2521,432)"><rect x="0" y="1" width="25" height="25" fill="#fff" stroke="#444" stroke-width="2"/><path d="M4 5V22" stroke="#888" stroke-width="1.500"/><rect x="7" y="5" width="14" height="3" fill="#2b7cc0"/><rect x="7" y="11" width="10" height="3" fill="#2b7cc0"/><rect x="7" y="17" width="13" height="3" fill="#2b7cc0"/></g>
<g transform="translate(2563,432)"><rect x="0" y="1" width="25" height="21" fill="#fff" stroke="#555" stroke-width="1.500"/><path d="M3 13L8 6 12 13Z" fill="#1aab40"/><path d="M14 6H23L18.500 13Z" fill="#d13438"/><path d="M2 16H23M2 20H23" stroke="#888" stroke-width="1.500"/></g>
<!-- row 5 -->
<g transform="translate(2353,468)"><rect x="0" y="0" width="25" height="25" fill="#fff" stroke="#444" stroke-width="2"/><rect x="0" y="0" width="25" height="5" fill="#444"/><rect class="g" x="4" y="9" width="5" height="4"/><rect class="g" x="4" y="16" width="5" height="4"/><path d="M13 13H26L21 19V26H18V19Z" fill="#fff" stroke="#444" stroke-width="1.600"/></g>
<g transform="translate(2395,468)"><rect x="0" y="0" width="25" height="25" fill="#fff" stroke="#444" stroke-width="2"/><path d="M0 5H25M0 12H25M0 18.500H25M8 5V25M16.500 5V25" stroke="#777" stroke-width="1.400" fill="none"/><rect x="0" y="0" width="25" height="5" fill="#555"/></g>
<g transform="translate(2437,468)"><rect x="0" y="0" width="25" height="25" fill="#5ba3e6" stroke="#444" stroke-width="2"/><rect x="0" y="0" width="25" height="5" fill="#555"/><path d="M0 12H25M0 18.500H25M8 5V25M16.500 5V25" stroke="#fff" stroke-width="1.400" fill="none"/></g>
<text x="2483" y="489" font-size="21" font-weight="700" fill="#2b7cc0" textLength="15" lengthAdjust="spacingAndGlyphs">R</text>
<text x="2520.500" y="487" font-size="23" font-weight="700" fill="#2b88d8" textLength="25" lengthAdjust="spacingAndGlyphs">Py</text>
<g transform="translate(2563,468)"><path class="k" d="M1 0V25H25"/><circle cx="20" cy="4" r="3" fill="#5ba3e6" stroke="#2b7cc0"/><path d="M1 5H17M1 13H15M1 20H10" stroke="#555" stroke-width="1.300"/><circle cx="9" cy="13" r="2.500" fill="#bbb"/></g>
<!-- row 6 -->
<g transform="translate(2353,504)"><rect class="b" x="0" y="9" width="9" height="7"/><rect class="b" x="16" y="0" width="9" height="7"/><rect class="b" x="16" y="9" width="9" height="7"/><rect class="b" x="16" y="18" width="9" height="7"/><path d="M9 12H16M12 3V21H16M12 3H16" fill="none" stroke="#444" stroke-width="1.500"/></g>
<g transform="translate(2395,504)"><path d="M1 2H25V19H10L7 25V19H1Z" fill="#fff" stroke="#2b7cc0" stroke-width="2"/></g>
<g transform="translate(2437,502)"><rect x="2" y="3" width="24" height="24" fill="#fff" stroke="#2b7cc0" stroke-width="2"/><path d="M1 1H9V11L5 17 1 11Z" fill="#d9730d"/><circle cx="23" cy="22" r="4" fill="#d9730d"/><circle cx="25" cy="14" r="1.800" fill="#d9730d"/><path d="M8 24L12 17H19V9" fill="none" stroke="#2b7cc0" stroke-width="3"/></g>
<g transform="translate(2479,504)"><rect x="0" y="4" width="24" height="16" rx="5" fill="none" stroke="#444" stroke-width="2"/><path d="M5 14L10 9 14 14 10 18ZM13 12L17 8 21 12 17 16Z" fill="#444"/></g>
<g fill="#444"><circle cx="2524" cy="515" r="1.700"/><circle cx="2533.500" cy="515" r="1.700"/><circle cx="2543" cy="515" r="1.700"/></g>
<rect x="2340" y="534" width="269" height="2" fill="#e1dfdd"/>
<!-- vis tabs -->
<rect x="2373" y="548.500" width="29" height="28" fill="none" stroke="#444" stroke-width="1.500" stroke-dasharray="3 2"/><path d="M2373 557H2402M2373 566H2402" stroke="#444" stroke-width="1.500" stroke-dasharray="3 2"/>
<rect x="2357" y="584" width="60" height="6" rx="3" fill="#f2c811"/>
<g fill="none" stroke="#444" stroke-width="1.800"><rect x="2434" y="548" width="22" height="7" rx="1"/><path d="M2456 551H2460V561H2447V566"/><rect x="2443.500" y="566" width="6" height="12"/>
<circle cx="2505" cy="561" r="13"/><path d="M2514 571L2522 579"/><path d="M2494 562L2501 556 2506 560 2515 553"/><path d="M2497 573V564M2501 574V560M2506 574V562M2511 572V558" stroke-width="1.500"/></g>
<!-- wells -->
<text x="2357" y="616" class="vp" textLength="31" lengthAdjust="spacingAndGlyphs">Axis</text>
<rect x="2346" y="630.500" width="253" height="53.500" class="dw"/>
<rect x="2350" y="637" width="244" height="32" class="ch"/>
<text x="2357" y="660" class="vp" textLength="126" lengthAdjust="spacingAndGlyphs">OriginCityName</text>
<path d="M2549 648L2557 657 2565.500 648M2576 648L2587 658M2587 648L2576 658" fill="none" stroke="#605e5c" stroke-width="1.500"/>
<text x="2357" y="718.500" class="vp" textLength="57" lengthAdjust="spacingAndGlyphs">Legend</text>
<rect x="2346" y="733.500" width="253" height="43" class="dw"/>
<rect x="2350" y="740" width="244" height="32" class="ch"/>
<text x="2357" y="763.300" class="vp" textLength="112" lengthAdjust="spacingAndGlyphs">OriginCountry</text>
<path d="M2549 751L2557 760 2565.500 751M2576 751L2587 761M2587 751L2576 761" fill="none" stroke="#605e5c" stroke-width="1.500"/>
<text x="2357" y="812" class="vp" textLength="49.500" lengthAdjust="spacingAndGlyphs">Values</text>
<rect x="2346" y="827.500" width="253" height="42" class="dw"/>
<rect x="2350" y="833.500" width="244" height="32" class="ch"/>
<text x="2357" y="855" class="vp" textLength="114.500" lengthAdjust="spacingAndGlyphs">AvgTicketPrice</text>
<path d="M2549 844L2557 853 2565.500 844M2576 844L2587 854M2587 844L2576 854" fill="none" stroke="#605e5c" stroke-width="1.500"/>
<text x="2357" y="904" class="vp" textLength="61.500" lengthAdjust="spacingAndGlyphs">Tooltips</text>
<rect x="2346" y="918.500" width="253" height="41" class="dw"/>
<text x="2361" y="946.300" class="vp" textLength="160" lengthAdjust="spacingAndGlyphs">Add data fields here</text>
<text x="2360.700" y="1005" font-size="23" fill="#605e5c" stroke="#605e5c" stroke-width=".7" textLength="137.700" lengthAdjust="spacingAndGlyphs">Drill through</text>
<text x="2352.400" y="1051.500" font-size="17" fill="#605e5c" textLength="98.600" lengthAdjust="spacingAndGlyphs">Cross-report</text>
<text x="2365.800" y="1095.600" font-size="17" fill="#605e5c" textLength="24.200" lengthAdjust="spacingAndGlyphs">Off</text>
<path d="M2412 1089.800H2441" stroke="#605e5c" stroke-width="2.500"/><circle cx="2405" cy="1089.800" r="7" fill="none" stroke="#605e5c" stroke-width="2.800"/>
<text x="2352.400" y="1147.500" font-size="17" fill="#605e5c" textLength="110.600" lengthAdjust="spacingAndGlyphs">Keep all filters</text>
<text x="2365.800" y="1191" font-size="17" fill="#605e5c" textLength="22.200" lengthAdjust="spacingAndGlyphs">On</text>
<path d="M2395 1186H2431" stroke="#605e5c" stroke-width="2.500"/><circle cx="2431" cy="1186" r="8.500" fill="#605e5c"/>
<rect x="2346" y="1218" width="253" height="37" class="dw"/>
<text x="2358" y="1244" class="vp" textLength="226" lengthAdjust="spacingAndGlyphs">Add drill-through fields here</text>
<!-- FIELDS -->
<text x="2629" y="288.300" font-size="24" fill="#4a4846" stroke="#4a4846" stroke-width=".6" textLength="60.500" lengthAdjust="spacingAndGlyphs">Fields</text>
<path d="M2852.500 271L2861 279 2852.500 287" fill="none" stroke="#605e5c" stroke-width="1.600"/>
<rect x="2617" y="322" width="256" height="43" fill="#fff" stroke="#c8c6c4" stroke-width="2.500"/>
<g fill="none" stroke="#444" stroke-width="1.600"><circle cx="2648" cy="341" r="8.500"/><path d="M2642 347L2635 355"/></g>
<text x="2670.600" y="350.700" font-size="18.500" fill="#605e5c" textLength="56" lengthAdjust="spacingAndGlyphs">Search</text>
<rect x="2611" y="372" width="269" height="2" fill="#e1dfdd"/>
<path d="M2617 412L2625.500 403 2634 412" fill="none" stroke="#605e5c" stroke-width="1.500"/>
<g fill="none" stroke="#323130" stroke-width="1.600"><rect x="2645" y="399.500" width="18" height="16"/><path d="M2645 404H2663M2645 410H2663M2651 399.500V415.500M2657 399.500V415.500"/></g><rect x="2645" y="399" width="18" height="4" fill="#323130"/>
<circle cx="2664" cy="417.700" r="9" fill="#f2c811"/><path d="M2660 418L2663 421 2668 415" class="cm" style="stroke-width:2"/>
<text x="2682.700" y="412.700" font-size="18.500" fill="#323130" stroke="#323130" stroke-width=".5" textLength="145.300" lengthAdjust="spacingAndGlyphs">`kibana_sample_...</text>
<!-- field rows -->
<rect x="2658" y="443" width="18" height="18" rx="2.500" class="ck"/><path d="M2663 452L2666 455 2671 449" class="cm"/>
<rect x="2659" y="479.500" width="16.500" height="16.500" rx="2.500" class="cb"/>
<rect x="2659" y="515.500" width="16.500" height="16.500" rx="2.500" class="cb"/>
<rect x="2659" y="551.500" width="16.500" height="16.500" rx="2.500" class="cb"/>
<rect x="2659" y="587.500" width="16.500" height="16.500" rx="2.500" class="cb"/>
<rect x="2659" y="623.500" width="16.500" height="16.500" rx="2.500" class="cb"/>
<rect x="2659" y="659.500" width="16.500" height="16.500" rx="2.500" class="cb"/>
<rect x="2659" y="695.500" width="16.500" height="16.500" rx="2.500" class="cb"/>
<rect x="2659" y="731.500" width="16.500" height="16.500" rx="2.500" class="cb"/>
<rect x="2659" y="767.500" width="16.500" height="16.500" rx="2.500" class="cb"/>
<rect x="2659" y="803.500" width="16.500" height="16.500" rx="2.500" class="cb"/>
<rect x="2659" y="839.500" width="16.500" height="16.500" rx="2.500" class="cb"/>
<rect x="2659" y="875.500" width="16.500" height="16.500" rx="2.500" class="cb"/>
<rect x="2659" y="911.500" width="16.500" height="16.500" rx="2.500" class="cb"/>
<rect x="2659" y="947.500" width="16.500" height="16.500" rx="2.500" class="cb"/>
<rect x="2659" y="983.500" width="16.500" height="16.500" rx="2.500" class="cb"/>
<rect x="2659" y="1019.500" width="16.500" height="16.500" rx="2.500" class="cb"/>
<rect x="2659" y="1055.500" width="16.500" height="16.500" rx="2.500" class="cb"/>
<rect x="2659" y="1091.500" width="16.500" height="16.500" rx="2.500" class="cb"/>
<rect x="2659" y="1127.500" width="16.500" height="16.500" rx="2.500" class="cb"/>
<rect x="2658" y="1163" width="18" height="18" rx="2.500" class="ck"/><path d="M2663 1172L2666 1175 2671 1169" class="cm"/>
<rect x="2658" y="1199" width="18" height="18" rx="2.500" class="ck"/><path d="M2663 1208L2666 1211 2671 1205" class="cm"/>
<rect x="2659" y="1235.500" width="16.500" height="16.500" rx="2.500" class="cb"/>
<rect x="2659" y="1271.500" width="16.500" height="16.500" rx="2.500" class="cb"/>
<rect x="2659" y="1307.500" width="16.500" height="16.500" rx="2.500" class="cb"/>
<g font-family="Liberation Serif,serif" font-size="20" font-weight="700" fill="#3b3a39">
<text x="2684" y="459">Σ</text><text x="2684" y="567">Σ</text><text x="2684" y="819">Σ</text><text x="2684" y="855">Σ</text><text x="2684" y="927">Σ</text><text x="2684" y="1071">Σ</text></g>
<g>
<text x="2714" y="459" class="fd" textLength="106" lengthAdjust="spacingAndGlyphs">AvgTicketPr...</text>
<text x="2714" y="495" class="fd" textLength="76" lengthAdjust="spacingAndGlyphs">Cancelled</text>
<text x="2714" y="531" class="fd" textLength="52" lengthAdjust="spacingAndGlyphs">Carrier</text>
<text x="2714" y="567" class="fd" textLength="91" lengthAdjust="spacingAndGlyphs">dayOfWeek</text>
<text x="2714" y="603" class="fd" textLength="35" lengthAdjust="spacingAndGlyphs">Dest</text>
<text x="2714" y="639" class="fd" textLength="103.700" lengthAdjust="spacingAndGlyphs">DestAirport...</text>
<text x="2714" y="675" class="fd" textLength="101" lengthAdjust="spacingAndGlyphs">DestCityNa...</text>
<text x="2714" y="711" class="fd" textLength="98.300" lengthAdjust="spacingAndGlyphs">DestCountry</text>
<text x="2714" y="747" class="fd" textLength="90" lengthAdjust="spacingAndGlyphs">DestRegion</text>
<text x="2714" y="783" class="fd" textLength="102" lengthAdjust="spacingAndGlyphs">DestWeather</text>
<text x="2714" y="819" class="fd" textLength="99" lengthAdjust="spacingAndGlyphs">DistanceKil...</text>
<text x="2714" y="855" class="fd" textLength="105" lengthAdjust="spacingAndGlyphs">DistanceMil...</text>
<text x="2714" y="891" class="fd" textLength="87.800" lengthAdjust="spacingAndGlyphs">FlightDelay</text>
<text x="2714" y="927" class="fd" textLength="101" lengthAdjust="spacingAndGlyphs">FlightDelay...</text>
<text x="2714" y="963" class="fd" textLength="101" lengthAdjust="spacingAndGlyphs">FlightDelay...</text>
<text x="2714" y="999" class="fd" textLength="82" lengthAdjust="spacingAndGlyphs">FlightNum</text>
<text x="2714" y="1035" class="fd" textLength="95" lengthAdjust="spacingAndGlyphs">FlightTime...</text>
<text x="2714" y="1071" class="fd" textLength="95" lengthAdjust="spacingAndGlyphs">FlightTime...</text>
<text x="2714" y="1107" class="fd" textLength="48" lengthAdjust="spacingAndGlyphs">Origin</text>
<text x="2714" y="1143" class="fd" textLength="105" lengthAdjust="spacingAndGlyphs">OriginAirpo...</text>
<text x="2714" y="1179" class="fd" textLength="105" lengthAdjust="spacingAndGlyphs">OriginCityN...</text>
<text x="2714" y="1215" class="fd" textLength="103.700" lengthAdjust="spacingAndGlyphs">OriginCoun...</text>
<text x="2714" y="1251" class="fd" textLength="103.700" lengthAdjust="spacingAndGlyphs">OriginRegion</text>
<text x="2714" y="1287" class="fd" textLength="102" lengthAdjust="spacingAndGlyphs">OriginWeat...</text>
<text x="2714" y="1323" class="fd" textLength="83" lengthAdjust="spacingAndGlyphs">timestamp</text>
</g>
<path d="M2629 1312L2637 1321 2646 1312" fill="none" stroke="#605e5c" stroke-width="1.500"/>
<g fill="none" stroke="#323130" stroke-width="1.600"><rect x="2683" y="1309" width="17" height="15"/><path d="M2683 1313.500H2700M2687 1306V1310M2696 1306V1310"/></g>
<g fill="#323130"><rect x="2683" y="1309" width="17" height="4"/><rect x="2686" y="1316" width="3" height="2.500"/><rect x="2690.500" y="1316" width="3" height="2.500"/><rect x="2695" y="1316" width="3" height="2.500"/><rect x="2686" y="1320" width="3" height="2.500"/><rect x="2690.500" y="1320" width="3" height="2.500"/><rect x="2695" y="1320" width="3" height="2.500"/></g>
</svg>
</body></html>
